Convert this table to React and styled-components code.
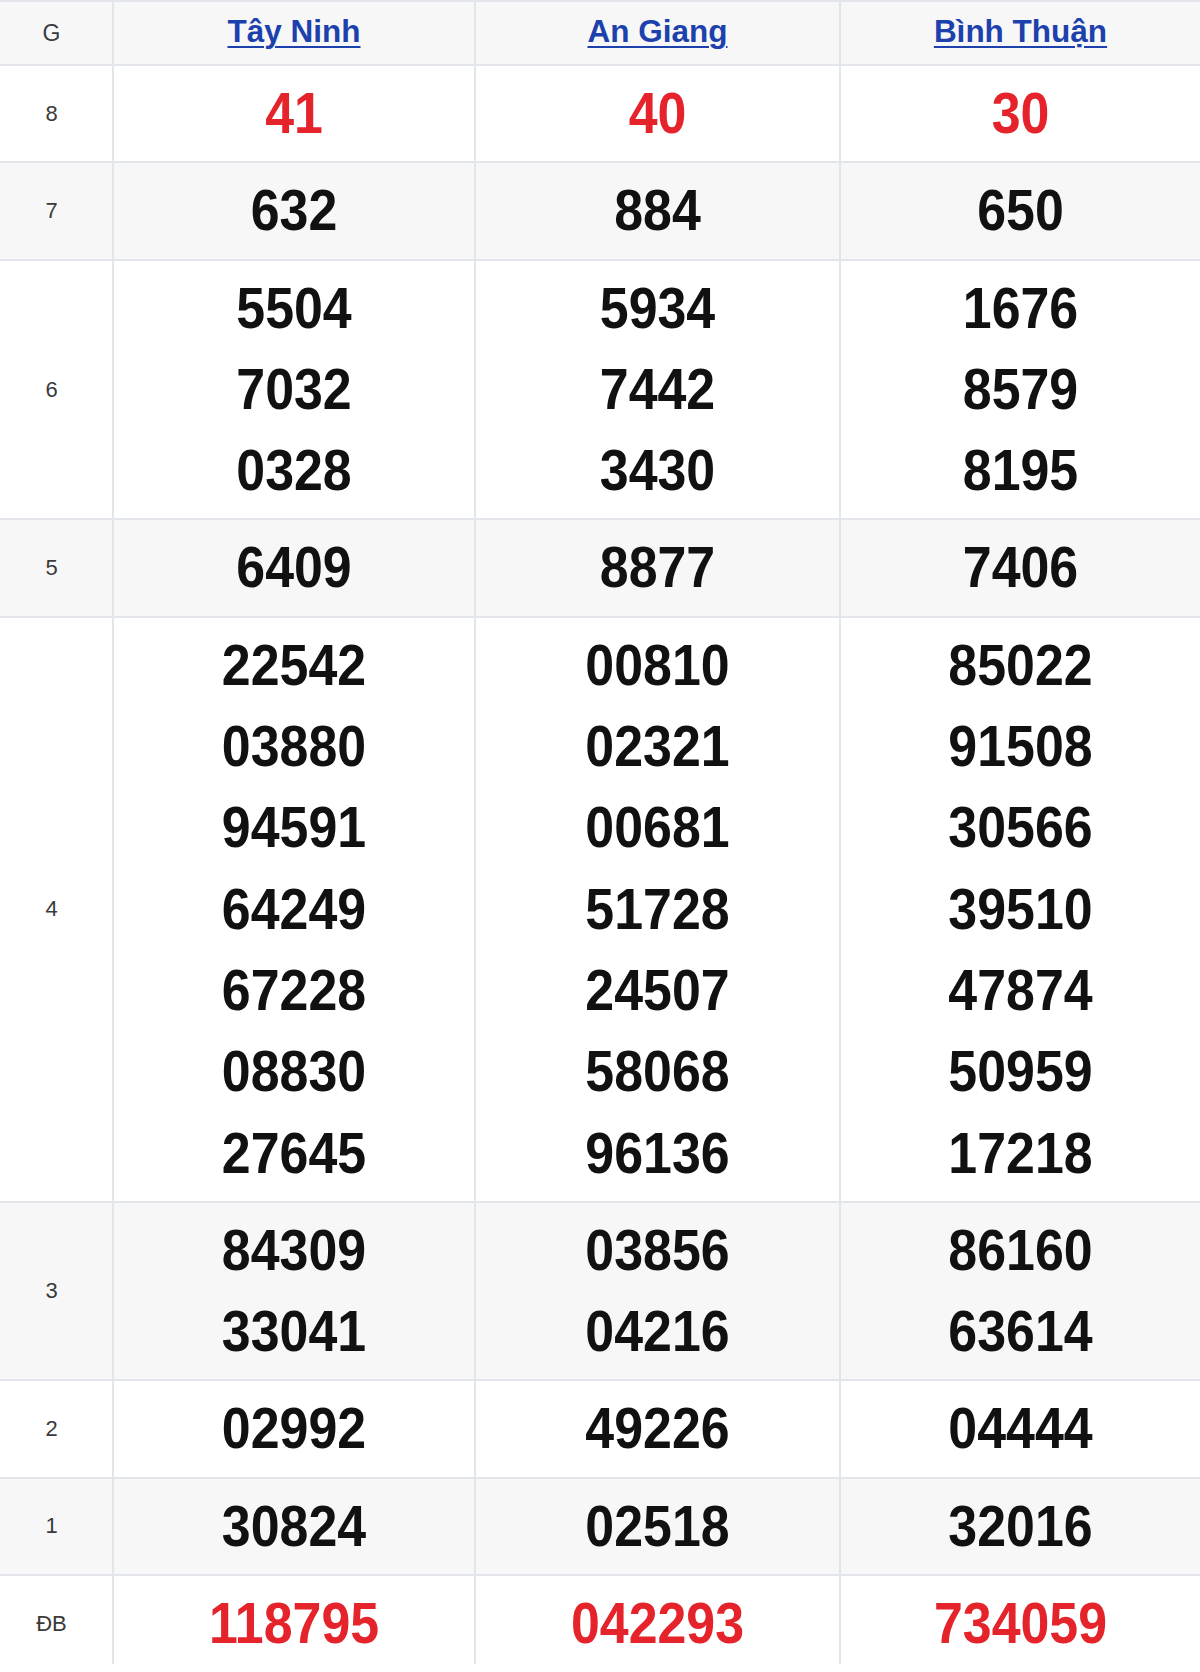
import React from 'react'
import styled, {createGlobalStyle} from 'styled-components'

const GlobalStyle = createGlobalStyle`
    html, body {
        margin: 0;
        padding: 0;
        background: #ffffff;
    }
    body {
        font-family: "Liberation Sans", Arial, sans-serif;
    }
`

const Table = styled.div`
    width: 1200px;
    border-top: 2px solid #e2e5e9;
`

// one row of the results table, grey on every other row
const Row = styled.div`
    display: grid;
    grid-template-columns: 114px 362px 365px 1fr;
    background: ${props => props.$shade ? "#f7f7f8" : "#ffffff"};
    border-bottom: ${props => props.$last ? "none" : "2px solid #e2e5e9"};
`

const Cell = styled.div`
    box-sizing: border-box;
    border-right: 2px solid #e2e5e9;
    display: flex;
    flex-direction: column;
    align-items: stretch;
    justify-content: center;
    padding: ${props => props.$last ? "7px 0 0" : "7px 0"};

    &:last-child {
        border-right: none;
    }
`

const HeadCell = styled(Cell)`
    height: 62px;
    padding: 0;
    align-items: center;
`

const LabelCell = styled(Cell)`
    align-items: center;
    padding-right: 9px;
    font-size: 22px;
    color: #3a3a3a;
`

const HeadLabel = styled(HeadCell)`
    padding-right: 9px;
    font-size: 23px;
    color: #3a3a3a;
`

const Province = styled.a`
    font-size: 31.5px;
    font-weight: bold;
    color: #1c41ad;
    text-decoration: underline;
    text-underline-offset: 4px;
    text-decoration-thickness: 2px;
    line-height: 40px;
    margin-top: -4px;
`

const Number = styled.div`
    font-size: 57px;
    font-weight: bold;
    line-height: 81.3px;
    text-align: center;
    color: ${props => props.$red ? "#e5232b" : "#111111"};
    transform: scaleX(0.91);
`

const provinces = ["Tây Ninh", "An Giang", "Bình Thuận"]

const prizes = [
    {label: "8", red: true, values: [["41"], ["40"], ["30"]]},
    {label: "7", values: [["632"], ["884"], ["650"]]},
    {label: "6", values: [
        ["5504", "7032", "0328"],
        ["5934", "7442", "3430"],
        ["1676", "8579", "8195"],
    ]},
    {label: "5", values: [["6409"], ["8877"], ["7406"]]},
    {label: "4", values: [
        ["22542", "03880", "94591", "64249", "67228", "08830", "27645"],
        ["00810", "02321", "00681", "51728", "24507", "58068", "96136"],
        ["85022", "91508", "30566", "39510", "47874", "50959", "17218"],
    ]},
    {label: "3", values: [
        ["84309", "33041"],
        ["03856", "04216"],
        ["86160", "63614"],
    ]},
    {label: "2", values: [["02992"], ["49226"], ["04444"]]},
    {label: "1", values: [["30824"], ["02518"], ["32016"]]},
    {label: "ĐB", red: true, values: [["118795"], ["042293"], ["734059"]]},
]

const App = () => {
    return (
        <>
            <GlobalStyle />
            <Table>
                <Row $shade>
                    <HeadLabel>G</HeadLabel>
                    {provinces.map(name => (
                        <HeadCell key={name}>
                            <Province href="#">{name}</Province>
                        </HeadCell>
                    ))}
                </Row>
                {prizes.map((prize, i) => {
                    const last = i === prizes.length - 1
                    return (
                        <Row key={prize.label} $shade={i % 2 === 1} $last={last}>
                            <LabelCell $last={last}>{prize.label}</LabelCell>
                            {prize.values.map((list, j) => (
                                <Cell key={j} $last={last}>
                                    {list.map((num, k) => (
                                        <Number key={k} $red={prize.red}>{num}</Number>
                                    ))}
                                </Cell>
                            ))}
                        </Row>
                    )
                })}
            </Table>
        </>
    )
}

export default App
